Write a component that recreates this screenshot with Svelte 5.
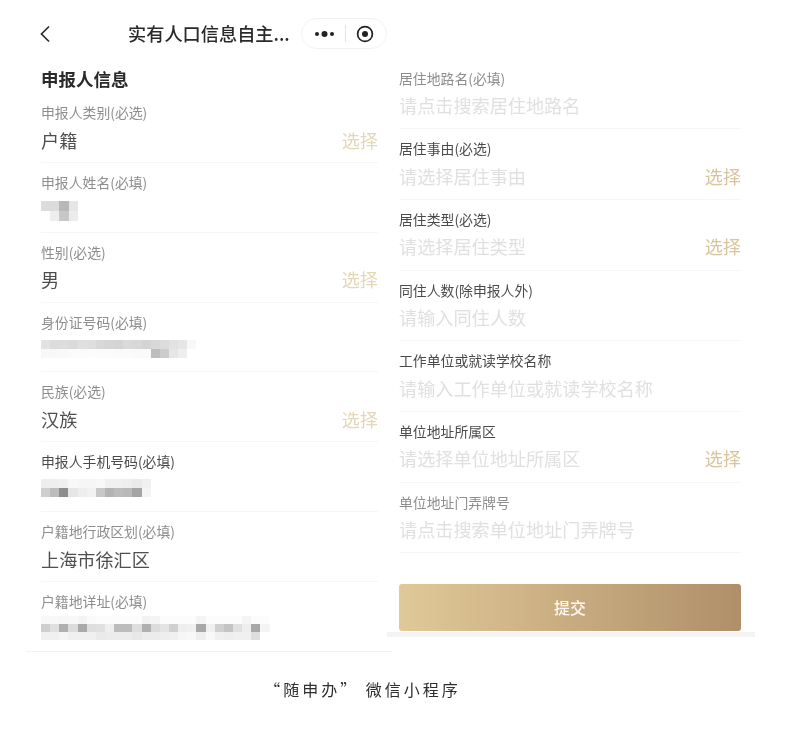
<script>
  const left = [
    { label: '申报人类别(必选)', value: '户籍', pick: true },
    { label: '申报人姓名(必填)', mosaic: { w: 9.2, h: 10, top: 4, rows: [['dcdcdc','dcdcdc','b8b8b8','e6e6e6'],['ffffff','eeeeee','c8c8c8','ececec']] } },
    { label: '性别(必选)', value: '男', pick: true },
    { label: '身份证号码(必填)', mosaic: { w: 9.15, h: 9, top: 0, rows: [
      ['e2e2e2','dcdcdc','dddddd','dadada','e0e0e0','dedede','d8d8d8','d6d6d6','d4d4d4','dadada','d8d8d8','d4d4d4','d8d8d8','dcdcdc','e2e2e2','e6e6e6','f8f8f8'],
      ['f8f8f8','f8f8f8','f9f9f9','fbfbfb','fbfbfb','fcfcfc','fbfbfb','fbfbfb','fafafa','fbfbfb','fafafa','fafafa','bdbdbd','cccccc','e6e6e6','eeeeee','ffffff']] } },
    { label: '民族(必选)', value: '汉族', pick: true },
    { label: '申报人手机号码(必填)', dark: true, mosaic: { w: 9.15, h: 9, top: -2, rows: [
      ['eeeeee','eeeeee','f0f0f0','f8f8f8','f6f6f6','f6f6f6','f8f8f8','f0f0f0','f0f0f0','eeeeee','eaeaea','f0f0f0'],
      ['cfcfcf','bcbcbc','8e8e8e','e6e6e6','eeeeee','f2f2f2','c8c8c8','b4b4b4','bcbcbc','b8b8b8','a4a4a4','f4f4f4']] } },
    { label: '户籍地行政区划(必填)', value: '上海市徐汇区' },
    { label: '户籍地详址(必填)', mosaic: { w: 9.15, h: 8, top: 0, rows: [
      ['f8f8f8','f8f8f8','f6f6f6','f8f8f8','f4f4f4','fafafa','fcfcfc','fcfcfc','fcfcfc','fcfcfc','fcfcfc','f2f2f2','f4f4f4','fcfcfc','fcfcfc','fcfcfc','fcfcfc','f4f4f4','fcfcfc','fcfcfc','fcfcfc','fcfcfc','f4f4f4','fcfcfc','fcfcfc'],
      ['cfcfcf','e0e0e0','b0b0b0','dcdcdc','aaaaaa','dedede','e0e0e0','eeeeee','bcbcbc','bcbcbc','dedede','b0b0b0','dcdcdc','e4e4e4','d0d0d0','eeeeee','f0f0f0','a8a8a8','f0f0f0','d0d0d0','c4c4c4','e0e0e0','eeeeee','a8a8a8','f4f4f4'],
      ['f0f0f0','f0f0f0','f4f4f4','f0f0f0','f0f0f0','f0f0f0','eaeaea','ececec','ececec','ececec','e8e8e8','ececec','ececec','eeeeee','f0f0f0','f6f6f6','f8f8f8','eeeeee','f8f8f8','f0f0f0','eeeeee','f0f0f0','f0f0f0','dedede','ffffff']] } }
  ];
  const right = [
    { label: '居住地路名(必填)', hint: '请点击搜索居住地路名' },
    { label: '居住事由(必选)', dark: true, hint: '请选择居住事由', pick: true },
    { label: '居住类型(必选)', dark: true, hint: '请选择居住类型', pick: true },
    { label: '同住人数(除申报人外)', dark: true, hint: '请输入同住人数' },
    { label: '工作单位或就读学校名称', dark: true, hint: '请输入工作单位或就读学校名称' },
    { label: '单位地址所属区', dark: true, hint: '请选择单位地址所属区', pick: true },
    { label: '单位地址门弄牌号', hint: '请点击搜索单位地址门弄牌号' }
  ];
</script>

{#snippet row(f)}
  <div class="row">
    <div class="label" class:dark={f.dark}>{f.label}</div>
    <div class="line">
      {#if f.mosaic}
        <div class="mosaic" style="margin-top:{f.mosaic.top}px">
          {#each f.mosaic.rows as r}
            <div class="mrow">
              {#each r as c}
                <span style="width:{f.mosaic.w}px;height:{f.mosaic.h}px;background:#{c}"></span>
              {/each}
            </div>
          {/each}
        </div>
      {:else if f.hint}
        <span class="hint">{f.hint}</span>
      {:else}
        <span class="value">{f.value}</span>
      {/if}
      {#if f.pick}<span class="pick">选择</span>{/if}
    </div>
  </div>
{/snippet}

<div class="page">
  <div class="columns">
    <section class="col-left">
      <header class="nav">
        <svg class="back" width="12" height="18" viewBox="0 0 12 18"><path d="M10 1.5 2.5 9l7.5 7.5" fill="none" stroke="#2b2b2b" stroke-width="1.7"/></svg>
        <div class="title">实有人口信息自主...</div>
        <div class="capsule">
          <svg width="22" height="8" viewBox="0 0 22 8"><circle cx="3" cy="4" r="2" fill="#222"/><circle cx="10.5" cy="4" r="3" fill="#222"/><circle cx="18" cy="4" r="2" fill="#222"/></svg>
          <i></i>
          <svg width="18" height="18" viewBox="0 0 18 18"><circle cx="9" cy="9" r="7.4" fill="none" stroke="#222" stroke-width="1.7"/><circle cx="9" cy="9" r="3" fill="#222"/></svg>
        </div>
      </header>
      <h2>申报人信息</h2>
      <div class="rows">
        {#each left as f}{@render row(f)}{/each}
      </div>
    </section>
    <section class="col-right">
      <div class="rows">
        {#each right as f}{@render row(f)}{/each}
      </div>
      <button class="submit">提交</button>
      <div class="band"></div>
    </section>
  </div>
  <p class="caption">“随申办” 微信小程序</p>
</div>

<style>
  :global(body) {
    margin: 0;
    background: #fff;
  }
  .page {
    width: 794px;
    height: 734px;
    overflow: hidden;
    font-family: "Noto Sans CJK SC", "Noto Sans", sans-serif;
    color: #333;
    filter: blur(0.45px);
  }
  .columns {
    display: flex;
    height: 652px;
  }
  .col-left {
    box-sizing: border-box;
    width: 366px;
    height: 652px;
    margin-left: 26px;
    padding: 18px 14px 0 15px;
    border-bottom: 1px solid #f3f3f3;
  }
  .nav {
    display: flex;
    align-items: center;
    height: 31px;
  }
  .back {
    flex: none;
    margin-left: -2px;
  }
  .title {
    width: 163px;
    margin: -2px 0 0 77px;
    font-size: 18.2px;
    font-weight: 500;
    color: #2a2a2a;
    white-space: nowrap;
  }
  .capsule {
    flex: none;
    display: flex;
    align-items: center;
    justify-content: space-between;
    box-sizing: border-box;
    width: 86px;
    height: 31px;
    margin-left: 11px;
    margin-right: -9px;
    padding: 0 12px 0 12px;
    border: 1px solid #f1f1f1;
    border-radius: 16px;
    background: #fff;
  }
  .capsule i {
    width: 1px;
    height: 17px;
    margin-left: -2px;
    background: #e4e4e4;
  }
  h2 {
    margin: 18px 0 0;
    font-size: 17.5px;
    line-height: 24px;
    font-weight: 700;
    color: #2a2a2a;
  }
  .col-left .rows {
    margin-top: 2px;
  }
  .col-right {
    width: 342px;
    margin-left: 7px;
    padding-top: 58.5px;
    position: relative;
  }
  .row {
    box-sizing: border-box;
    height: 69.85px;
    padding-top: 10px;
    border-bottom: 1px solid #f6f6f6;
  }
  .col-left .row:last-child {
    border-bottom: none;
  }
  .col-right .row {
    height: 70.7px;
    padding-top: 10px;
  }
  .label {
    font-size: 13.85px;
    line-height: 18px;
    color: #8d8d8d;
  }
  .label.dark {
    color: #4a4a4a;
  }
  .line {
    display: flex;
    align-items: center;
    justify-content: space-between;
    height: 27px;
    margin-top: 5px;
    font-size: 18.15px;
  }
  .value {
    color: #4f4f4f;
  }
  .hint {
    color: #e0e0e0;
  }
  .pick {
    color: #e4d7b8;
  }
  .col-right .pick {
    color: #d9c59b;
  }
  .mosaic {
    display: flex;
    flex-direction: column;
  }
  .mrow {
    display: flex;
  }
  .mrow span {
    display: block;
  }
  .submit {
    display: block;
    width: 342px;
    height: 47px;
    margin: 30.5px 0 0;
    padding: 0;
    border: none;
    border-radius: 3px;
    background: linear-gradient(90deg, #e0c998, #b08f69);
    color: #fdf9f2;
    font-family: inherit;
    font-size: 16px;
    font-weight: 500;
  }
  .band {
    height: 5px;
    width: 368px;
    margin: 1px 0 0 -12px;
    background: #f4f4f4;
  }
  .caption {
    margin: 26px 0 0;
    text-align: center;
    padding-right: 69px;
    font-size: 16px;
    line-height: 22px;
    letter-spacing: 3px;
    color: #2e2e2e;
    font-weight: 400;
  }
</style>
